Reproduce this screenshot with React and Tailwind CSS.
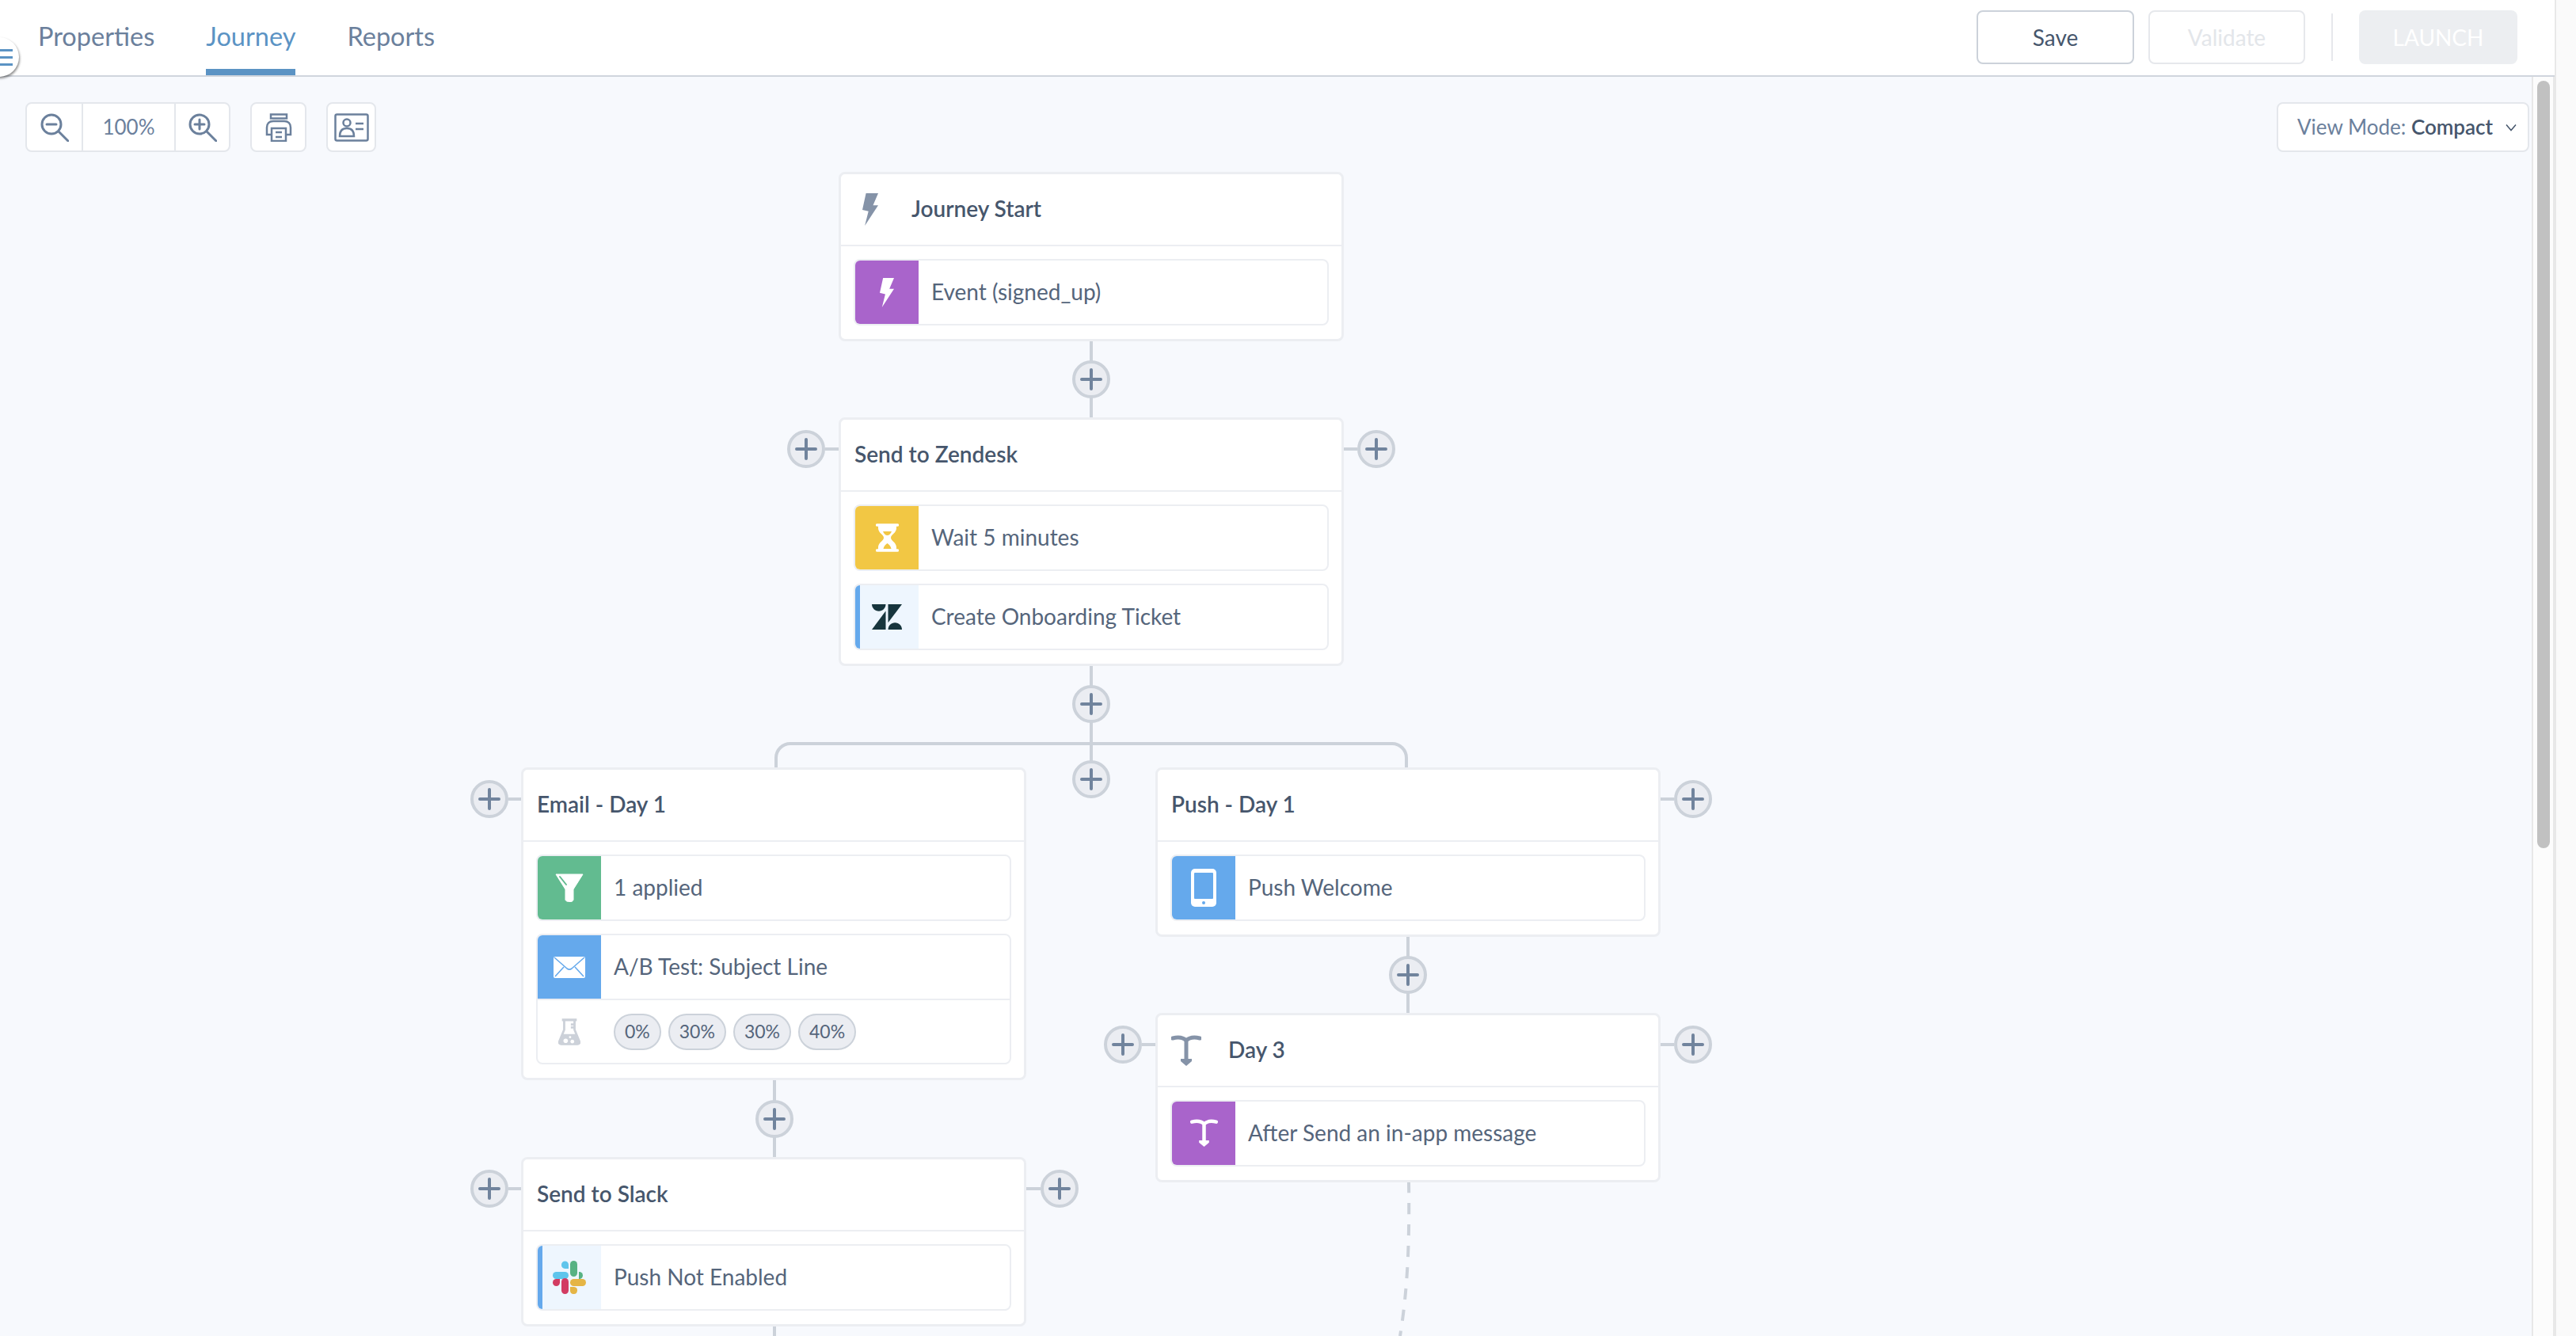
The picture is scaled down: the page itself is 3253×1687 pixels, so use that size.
import React from 'react';

const font = { fontFamily: '"Lato", "Open Sans", sans-serif' };

function Plus({ x, y }) {
  return (
    <button
      style={{ left: x - 24, top: y - 24 }}
      className="absolute w-12 h-12 rounded-full bg-[#ebedf2] border-4 border-[#ccd2da] flex items-center justify-center"
    >
      <svg width="28" height="28" viewBox="0 0 28 28" stroke="#71849d" strokeWidth="4" strokeLinecap="round">
        <path d="M14 2v24M2 14h24" />
      </svg>
    </button>
  );
}

function Bolt({ color, className }) {
  return (
    <svg className={className} viewBox="0 0 20 41">
      <polygon fill={color} points="4.600,0 20,0 13.500,15.200 20,15.200 3.100,41 7.700,22.800 0,20.900" />
    </svg>
  );
}

function SplitIcon({ color, className, strokeWidth = 5 }) {
  return (
    <svg className={className} viewBox="0 0 38 40" fill="none">
      <path d="M2 4c8-2 13-1 17 3c4-4 9-5 17-3M19 7v25" stroke={color} strokeWidth={strokeWidth} strokeLinecap="round" />
      <polygon fill={color} points="12,30 26,30 26,33 19,39 12,33" />
    </svg>
  );
}

function Hourglass() {
  return (
    <svg className="w-[29px] h-9" viewBox="0 0 29 36" fill="none">
      <path d="M1.500 2h26M1.500 34h26" stroke="#fff" strokeWidth="3.500" strokeLinecap="round" />
      <path d="M3 3v3c0 6 7 8 7 12s-7 6-7 12v3h23v-3c0-6-7-8-7-12s7-6 7-12V3z" fill="#fff" />
      <path d="M9 10h11c-1 3-3.500 5-5.500 5s-4.500-2-5.500-5z" fill="#f2c744" />
      <path d="M14.500 25c2 1.500 4.500 3.500 5 7H9.500c.5-3.500 3-5.500 5-7z" fill="#f2c744" />
    </svg>
  );
}

function Zendesk() {
  return (
    <svg className="w-[38px] h-8" viewBox="0 0 38 32">
      <g fill="#17353d">
        <path d="M17.500 8.500V32H0z" />
        <path d="M17.500 0c0 4.800-3.900 8.700-8.750 8.700S0 4.800 0 0z" />
        <path d="M20.500 23.300V0H38z" />
        <path d="M20.500 32c0-4.800 3.900-8.700 8.750-8.700S38 27.200 38 32z" />
      </g>
    </svg>
  );
}

function Funnel() {
  return (
    <svg className="w-9 h-9" viewBox="0 0 36 36">
      <path d="M1 1h34L23 20v13c0 1.500-2.500 3-4 3s-6-1-6-3V20z" fill="#fff" stroke="#fff" strokeLinejoin="round" />
      <path d="M6 4l8 10" stroke="#62bb90" strokeWidth="2" strokeLinecap="round" />
    </svg>
  );
}

function Envelope() {
  return (
    <svg className="w-10 h-[27px]" viewBox="0 0 40 27">
      <rect width="40" height="27" rx="2" fill="#fff" />
      <path d="M1 1l16 14c2 1.500 4 1.500 6 0L39 1M2 25l11-12M38 25L27 13" fill="none" stroke="#65a9ec" strokeWidth="1.600" />
    </svg>
  );
}

function Flask() {
  return (
    <svg className="w-[28px] h-9" viewBox="0 0 30 36" fill="none">
      <rect x="5" y="0" width="20" height="3.500" fill="#ccd1d9" />
      <path d="M8 3v12L1.500 31c-.8 2 .5 3.500 2.500 3.500h22c2 0 3.300-1.500 2.500-3.500L22 15V3M17 8h5M17 12h5" stroke="#ccd1d9" strokeWidth="3" />
      <path d="M5 21h20l4 11c.6 2-.5 3.500-2.500 3.500h-23C1.500 35.500.4 34 1 32z" fill="#ccd1d9" />
      <circle cx="10" cy="30" r="3" fill="#fff" />
      <circle cx="19" cy="31" r="2.500" fill="#fff" />
      <circle cx="16" cy="25" r="1.500" fill="#fff" />
    </svg>
  );
}

function Slack() {
  return (
    <svg className="w-[42px] h-[42px]" viewBox="0 0 42 42">
      <rect x="0" y="14" width="20" height="9" rx="4.500" fill="#5fc5ec" />
      <path d="M11 5a4.500 4.500 0 0 1 9 0v5h-4.500A4.500 4.500 0 0 1 11 5z" fill="#5fc5ec" />
      <rect x="22" y="0" width="9" height="20" rx="4.500" fill="#57b283" />
      <path d="M33 14h.500a4.500 4.500 0 0 1 0 9H33z" fill="#57b283" />
      <rect x="22" y="23" width="20" height="9" rx="4.500" fill="#e5b545" />
      <path d="M22 33h5a4.500 4.500 0 1 1-5 4.500z" fill="#e5b545" />
      <rect x="11" y="22" width="9" height="20" rx="4.500" fill="#d23c62" />
      <path d="M9 23v4.500a4.500 4.500 0 1 1-4.500-4.500z" fill="#d23c62" />
    </svg>
  );
}

function Phone() {
  return (
    <svg className="w-8 h-12" viewBox="0 0 32 48">
      <rect width="32" height="48" rx="5" fill="#fff" />
      <rect x="4" y="5" width="24" height="33" rx="1" fill="#65a9ec" />
      <circle cx="16" cy="43" r="2" fill="#65a9ec" />
    </svg>
  );
}

function Row({ iconBg, accent, icon, label, children }) {
  return (
    <div className="border-2 border-[#eceef2] rounded-lg bg-white overflow-hidden">
      <div className="flex items-stretch h-[80px]">
        <div className={`w-[80px] shrink-0 flex items-center justify-center ${iconBg} ${accent ? 'border-l-[6px] border-[#65a9ec] pr-[6px]' : ''}`}>
          {icon}
        </div>
        <div className="pl-[16px] pb-[2px] flex items-center text-[28px] text-[#55657b]">{label}</div>
      </div>
      {children}
    </div>
  );
}

function Node({ x, y, title, icon, children }) {
  return (
    <div style={{ left: x, top: y }} className="absolute w-[638px] bg-white border-[3px] border-[#eceef2] rounded-lg">
      <div className="h-[91px] pl-[17px] flex items-center border-b-2 border-[#eceef2] text-[28px] font-semibold text-[#46566c]">
        {icon && <div className="w-[72px] shrink-0">{icon}</div>}
        <span className="pb-[3px]">{title}</span>
      </div>
      <div className="flex flex-col gap-[16px] p-[16px] pb-[17px]">{children}</div>
    </div>
  );
}

function Chip({ children }) {
  return (
    <span className="h-[46px] px-[12px] flex items-center rounded-full bg-[#ebedf2] border-2 border-[#ccd2da] text-[23px] text-[#55657b]">
      {children}
    </span>
  );
}

const tool = 'bg-white border-2 border-[#e4e7ec] rounded-lg flex items-center justify-center h-[63px]';

export default function App() {
  return (
    <div style={font} className="w-[3253px] h-[1687px] overflow-hidden relative bg-[#fafafa] flex">
      <div className="w-[3228px] flex flex-col border-r-2 border-[#e8e8e8]">
        {/* Top bar */}
        <header className="relative z-10 h-[97px] shrink-0 bg-white border-b-2 border-[#d0d5dd] flex items-stretch pl-[48px] pr-[47px]">
          <nav className="flex gap-[65px] text-[32.500px] text-[#6b809c]">
            <a className="pt-[22px]">Properties</a>
            <a className="pt-[22px] text-[#5b93c4] border-b-[8px] border-[#5b93c4]">Journey</a>
            <a className="pt-[22px]">Reports</a>
          </nav>
          <div className="ml-auto flex items-center gap-[18px] pb-[2px]">
            <button className="w-[199px] h-[68px] rounded-lg border-2 border-[#ccd2da] text-[28px] text-[#46566c]">Save</button>
            <button className="w-[198px] h-[68px] rounded-lg border-2 border-[#e6e8ec] text-[28px] text-[#e3e6ea]">Validate</button>
            <div className="w-[2px] h-[60px] bg-[#e6e8ec] mx-[15px]" />
            <button className="w-[200px] h-[68px] rounded-lg bg-[#eceef1] text-[28px] text-white">LAUNCH</button>
          </div>
        </header>

        {/* Canvas */}
        <main className="relative flex-1 -mt-px bg-[#f7f9fd]">
          <div className="absolute left-[32px] top-[33px] flex gap-[25px]">
            <div className={`${tool} w-[259px] items-stretch`}>
              <div className="w-[71px] flex items-center justify-center border-r-2 border-[#e4e7ec]">
                <svg width="36" height="36" viewBox="0 0 36 36" fill="none" stroke="#6b809c" strokeWidth="3" strokeLinecap="round">
                  <circle cx="14" cy="14" r="12" />
                  <path d="M23 23l12 12M8 14h12" />
                </svg>
              </div>
              <div className="flex-1 flex items-center justify-center text-[26px] text-[#6b809c]">100%</div>
              <div className="w-[69px] flex items-center justify-center border-l-2 border-[#e4e7ec]">
                <svg width="36" height="36" viewBox="0 0 36 36" fill="none" stroke="#6b809c" strokeWidth="3" strokeLinecap="round">
                  <circle cx="14" cy="14" r="12" />
                  <path d="M23 23l12 12M8 14h12M14 8v12" />
                </svg>
              </div>
            </div>
            <div className={`${tool} w-[71px]`}>
              <svg width="36" height="36" viewBox="0 0 36 36" fill="none" stroke="#6b809c" strokeWidth="2.500">
                <rect x="8" y="1.500" width="20" height="5" />
                <path d="M9 27H3V18c0-5 3-8 8-8h14c5 0 8 3 8 8v9h-6" />
                <path d="M9 19h18v16H9zM14 24h8M14 30h8" />
              </svg>
            </div>
            <div className={`${tool} w-[63px]`}>
              <svg width="44" height="36" viewBox="0 0 44 36" fill="none" stroke="#6b809c" strokeWidth="2.500">
                <rect x="1.500" y="1.500" width="41" height="33" rx="2" />
                <circle cx="16" cy="12" r="4.500" />
                <path d="M7 29c0-7 3-10 9-10s9 3 9 10zM27 13h10M27 20h10" />
              </svg>
            </div>
          </div>

          <button className="absolute left-[2875px] top-[33px] w-[319px] h-[63px] bg-white border-2 border-[#e4e7ec] rounded-lg flex items-center pl-[24px] text-[26px] text-[#6b809c]">
            View Mode:&nbsp;<span className="font-semibold text-[#46566c]">Compact</span>
            <svg className="ml-[16px]" width="14" height="10" viewBox="0 0 14 10" fill="none" stroke="#46566c" strokeWidth="1.500">
              <path d="M1 1.500l6 7l6-7" />
            </svg>
          </button>

          {/* Scrollbar track and thumb */}
          <div className="absolute left-[3197px] top-0 bottom-0 w-[29px] bg-[#fcfcfc] border-x-2 border-[#e8e8e8]" />
          <div className="absolute left-[3204px] top-[6px] w-[16px] h-[969px] rounded-full bg-[#c1c1c1]" />

          {/* Wires. Coordinates below are canvas-relative (page y - 96) */}
          <svg className="absolute inset-0 w-full h-full" fill="none" stroke="#ccd2da" strokeWidth="4">
            <path d="M1378 335v100M1378 745v130M1042 471h20M1694 471h20" />
            <path d="M980 875v-14a18 18 0 0 1 18-18h760a18 18 0 0 1 18 18v14" />
            <path d="M642 913h20M2094 913h20M978 1265v104M1778 1086v100M1442 1223h20M2094 1223h20M642 1405h20M1294 1405h20M978 1575v20" />
            <path d="M1779 1396C1780 1470 1778 1530 1768 1591" strokeDasharray="14 13" />
          </svg>

          <Node x={1059} y={121} title="Journey Start" icon={<Bolt color="#8593a8" className="w-[20px] h-[41px] ml-[10px]" />}>
            <Row iconBg="bg-[#a964cb]" icon={<Bolt color="#fff" className="w-[18px] h-[37px]" />} label="Event (signed_up)" />
          </Node>
          <Node x={1059} y={431} title="Send to Zendesk">
            <Row iconBg="bg-[#f2c744]" icon={<Hourglass />} label="Wait 5 minutes" />
            <Row iconBg="bg-[#eef6fe]" accent icon={<Zendesk />} label="Create Onboarding Ticket" />
          </Node>
          <Node x={658} y={873} title="Email - Day 1">
            <Row iconBg="bg-[#62bb90]" icon={<Funnel />} label="1 applied" />
            <Row iconBg="bg-[#65a9ec]" icon={<Envelope />} label="A/B Test: Subject Line">
              <div className="h-[81px] flex items-center border-t-2 border-[#eceef2]">
                <div className="w-[80px] shrink-0 flex justify-center"><Flask /></div>
                <div className="pl-[16px] flex gap-[9px]">
                  <Chip>0%</Chip>
                  <Chip>30%</Chip>
                  <Chip>30%</Chip>
                  <Chip>40%</Chip>
                </div>
              </div>
            </Row>
          </Node>
          <Node x={1459} y={873} title="Push - Day 1">
            <Row iconBg="bg-[#65a9ec]" icon={<Phone />} label="Push Welcome" />
          </Node>
          <Node x={1459} y={1183} title="Day 3" icon={<SplitIcon color="#8593a8" className="w-[38px] h-[40px]" />}>
            <Row iconBg="bg-[#a964cb]" icon={<SplitIcon color="#fff" className="w-[35px] h-[36px]" />} label="After Send an in-app message" />
          </Node>
          <Node x={658} y={1365} title="Send to Slack">
            <Row iconBg="bg-[#eef6fe]" accent icon={<Slack />} label="Push Not Enabled" />
          </Node>

          <Plus x={1378} y={383} />
          <Plus x={1018} y={471} />
          <Plus x={1738} y={471} />
          <Plus x={1378} y={793} />
          <Plus x={1378} y={888} />
          <Plus x={618} y={913} />
          <Plus x={2138} y={913} />
          <Plus x={1778} y={1135} />
          <Plus x={1418} y={1223} />
          <Plus x={2138} y={1223} />
          <Plus x={978} y={1317} />
          <Plus x={618} y={1405} />
          <Plus x={1338} y={1405} />
        </main>
      </div>

      {/* Sidebar toggle */}
      <button className="absolute z-20 left-[-26px] top-[47px] w-[50px] h-[50px] rounded-full bg-white shadow-[1px_2px_3px_rgba(0,0,0,0.45)] flex flex-col items-end justify-center gap-[6px] pr-[8px]">
        <span className="w-[18px] h-[3px] bg-[#5b93c4]" />
        <span className="w-[18px] h-[3px] bg-[#5b93c4]" />
        <span className="w-[18px] h-[3px] bg-[#5b93c4]" />
      </button>
    </div>
  );
}
